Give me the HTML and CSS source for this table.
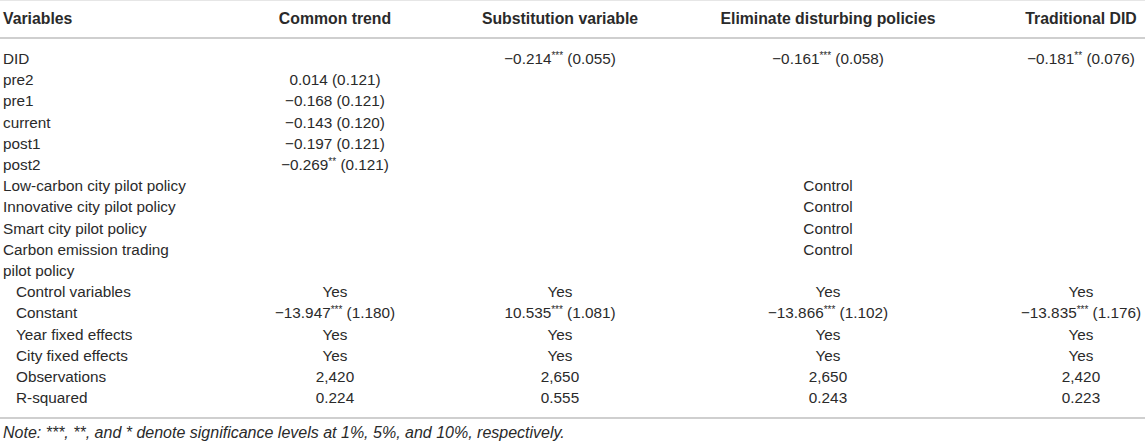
FILE: index.html
```html
<!DOCTYPE html>
<html>
<head>
<meta charset="utf-8">
<link rel="stylesheet" href="styles.css">
</head>
<body>
<div class="wrap">
<table class="results">
  <colgroup>
    <col class="c1"><col class="c2"><col class="c3"><col class="c4"><col class="c5">
  </colgroup>
  <thead>
    <tr>
      <th class="lbl">Variables</th>
      <th>Common trend</th>
      <th>Substitution variable</th>
      <th>Eliminate disturbing policies</th>
      <th>Traditional DID</th>
    </tr>
  </thead>
  <tbody>
    <tr class="first"><td class="lbl">DID</td><td></td><td>−0.214<sup>***</sup> (0.055)</td><td>−0.161<sup>***</sup> (0.058)</td><td>−0.181<sup>**</sup> (0.076)</td></tr>
    <tr><td class="lbl">pre2</td><td>0.014 (0.121)</td><td></td><td></td><td></td></tr>
    <tr><td class="lbl">pre1</td><td>−0.168 (0.121)</td><td></td><td></td><td></td></tr>
    <tr><td class="lbl">current</td><td>−0.143 (0.120)</td><td></td><td></td><td></td></tr>
    <tr><td class="lbl">post1</td><td>−0.197 (0.121)</td><td></td><td></td><td></td></tr>
    <tr><td class="lbl">post2</td><td>−0.269<sup>**</sup> (0.121)</td><td></td><td></td><td></td></tr>
    <tr><td class="lbl">Low-carbon city pilot policy</td><td></td><td></td><td>Control</td><td></td></tr>
    <tr><td class="lbl">Innovative city pilot policy</td><td></td><td></td><td>Control</td><td></td></tr>
    <tr><td class="lbl">Smart city pilot policy</td><td></td><td></td><td>Control</td><td></td></tr>
    <tr><td class="lbl">Carbon emission trading pilot policy</td><td></td><td></td><td>Control</td><td></td></tr>
    <tr><td class="lbl sub">Control variables</td><td>Yes</td><td>Yes</td><td>Yes</td><td>Yes</td></tr>
    <tr><td class="lbl sub">Constant</td><td>−13.947<sup>***</sup> (1.180)</td><td>10.535<sup>***</sup> (1.081)</td><td>−13.866<sup>***</sup> (1.102)</td><td>−13.835<sup>***</sup> (1.176)</td></tr>
    <tr><td class="lbl sub">Year fixed effects</td><td>Yes</td><td>Yes</td><td>Yes</td><td>Yes</td></tr>
    <tr><td class="lbl sub">City fixed effects</td><td>Yes</td><td>Yes</td><td>Yes</td><td>Yes</td></tr>
    <tr><td class="lbl sub">Observations</td><td>2,420</td><td>2,650</td><td>2,650</td><td>2,420</td></tr>
    <tr class="last"><td class="lbl sub">R-squared</td><td>0.224</td><td>0.555</td><td>0.243</td><td>0.223</td></tr>
  </tbody>
</table>
<p class="note">Note: ***, **, and * denote significance levels at 1%, 5%, and 10%, respectively.</p>
</div>
</body>
</html>
```

FILE: styles.css
```css
html, body {
  margin: 0;
  padding: 0;
  background: #ffffff;
}

.wrap {
  width: 1145px;
  font-family: "Liberation Sans", Arial, sans-serif;
  color: #2a2a2a;
}

.results {
  width: 1145px;
  border-collapse: collapse;
  table-layout: fixed;
  font-size: 15.3px;
  border-top: 1px solid #e6e6e6;
  border-bottom: 2px solid #cfcfcf;
}

.c1 { width: 189px; }
.c2 { width: 292px; }
.c3 { width: 158px; }
.c4 { width: 378px; }
.c5 { width: 128px; }

.results th {
  font-weight: bold;
  font-size: 15.8px;
  text-align: center;
  height: 36px;
  padding: 0;
  line-height: 18px;
  border-bottom: 2px solid #cfcfcf;
  vertical-align: middle;
}

.results th.lbl {
  text-align: left;
  padding-left: 3px;
}

.results td {
  text-align: center;
  padding: 0;
  line-height: 21.2px;
  vertical-align: top;
  white-space: nowrap;
}

.results td.lbl {
  text-align: left;
  padding-left: 3px;
  white-space: normal;
}

.results td.sub {
  padding-left: 16px;
}

.results tr.first td {
  padding-top: 9px;
}

.results tr.last td {
  padding-bottom: 9px;
}

.results sup {
  font-size: 10px;
  line-height: 0;
  vertical-align: 5px;
}

.note {
  margin: 6px 0 0 3px;
  font-size: 16px;
  font-style: italic;
  line-height: 16px;
}
```
